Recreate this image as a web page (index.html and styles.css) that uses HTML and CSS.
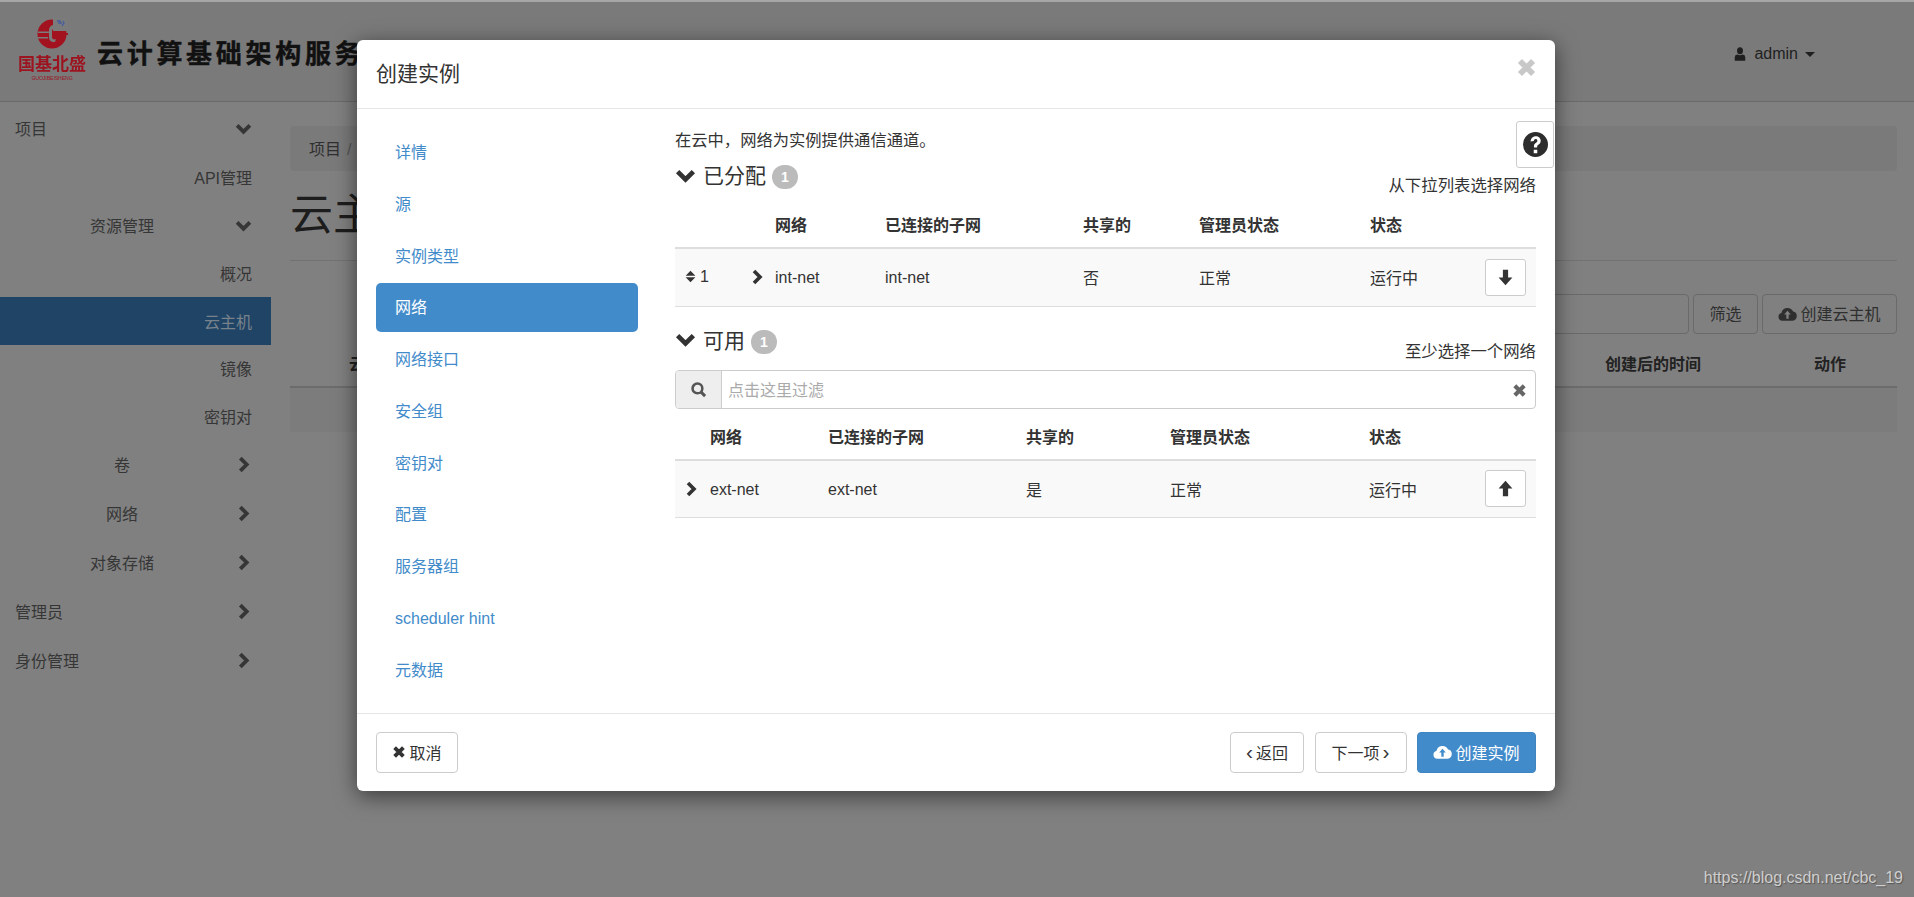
FILE: index.html
```html
<!DOCTYPE html>
<html lang="zh-CN">

<head>
    <meta charset="UTF-8">
    <title>创建实例</title>
    <link rel="stylesheet" href="styles.css">
</head>

<body>
    <!-- glyphicon style icons -->
    <svg class="sprite" xmlns="http://www.w3.org/2000/svg">
        <symbol id="i-down" viewBox="0 0 16 16"><path d="M2 5l6 6 6-6" fill="none" stroke="currentColor" stroke-width="3.6"/></symbol>
        <symbol id="i-right" viewBox="0 0 16 16"><path d="M5 2l6 6-6 6" fill="none" stroke="currentColor" stroke-width="3.6"/></symbol>
        <symbol id="i-remove" viewBox="0 0 16 16"><path d="M3 3l10 10M13 3L3 13" fill="none" stroke="currentColor" stroke-width="4.4"/></symbol>
        <symbol id="i-search" viewBox="0 0 16 16"><circle cx="7" cy="7" r="4.6" fill="none" stroke="currentColor" stroke-width="2.4"/><path d="M10.2 10.2l4 4" stroke="currentColor" stroke-width="2.8"/></symbol>
        <symbol id="i-cloud" viewBox="0 0 16 16"><path fill-rule="evenodd" d="M3.6 14A3.3 3.3 0 0 1 2.9 7.5 5.2 5.2 0 0 1 12.7 6.3 3.9 3.9 0 0 1 12.3 14zM8 5.6L5.2 8.8H7V12.4H9V8.8H10.8z"/></symbol>
        <symbol id="i-user" viewBox="0 0 16 16"><ellipse cx="8" cy="4.4" rx="3.4" ry="4"/><path d="M2 15.6V11.6Q2 9 5 8.6Q8 10.4 11 8.6Q14 9 14 11.6V15.6z"/></symbol>
        <symbol id="i-arrow-down" viewBox="0 0 16 16"><path d="M5.800 1.500h4.400v6.500h3.600L8 14.500 2.200 8h3.600z"/></symbol>
        <symbol id="i-arrow-up" viewBox="0 0 16 16"><path d="M5.800 14.500h4.400V8h3.600L8 1.500 2.200 8h3.600z"/></symbol>
        <symbol id="i-sort" viewBox="0 0 16 16"><path d="M8 1l6 6H2zM8 15l-6-6h12z"/></symbol>
        <symbol id="i-help" viewBox="0 0 24 24"><path fill-rule="evenodd" d="M12 0a12 12 0 1 0 0 24 12 12 0 0 0 0-24zM10.3 17h3.4v3.4h-3.4zM7.3 9.2C7.4 6 9.500 4 12.300 4 15 4 17 5.800 17 8.300c0 1.900-.9 3-2.300 3.900-.8.5-1.100 1-1.100 1.900v.8h-3.100v-1.100c0-1.600.6-2.600 2-3.500 1-.6 1.300-1.200 1.300-2 0-.9-.7-1.500-1.600-1.500-1 0-1.700.7-1.800 1.900z"/></symbol>
    </svg>

    <div class="page">
        <header class="topbar">
            <div class="brand">
                <div class="logo">
                    <svg class="logo-mark" viewBox="0 0 32 32" xmlns="http://www.w3.org/2000/svg">
                        <circle cx="16" cy="16" r="14.500" fill="#a3121f"/>
                        <path d="M17 0h15v13H17z" fill="#7b7b7b"/>
                        <path d="M17 7h5v3h-5zM2 13.500h11v1.500H2zM2 19h10v1.500H2z" fill="#7b7b7b"/>
                        <path d="M17 15h15v2H22v3h-5z" fill="#a3121f"/>
                        <path d="M13 13c0-4 2-5.500 4-6v4c-1 .5-1 1.500-1 2v6c0 2 2 3 4 2l-1 3c-3 .5-6-1-6-5z" fill="#7b7b7b"/>
                        <path d="M21 3h3l-1 2h3M27 3l1 2-2 3" fill="none" stroke="#4a5f9c" stroke-width="1.400"/>
                    </svg>
                    <div class="logo-name">国基北盛</div>
                    <div class="logo-sub"><span>GUOJIBEISHENG</span></div>
                </div>
                <div class="brand-title">云计算基础架构服务</div>
            </div>
            <div class="user-menu">
                <svg class="icon-user"><use href="#i-user"/></svg>
                <span>admin</span>
                <span class="caret"></span>
            </div>
        </header>

        <div class="layout">
            <nav class="sidebar">
                <div class="side-item top first">项目<svg class="side-icon"><use href="#i-down"/></svg></div>
                <div class="side-item leaf">API管理</div>
                <div class="side-item mid">资源管理<svg class="side-icon"><use href="#i-down"/></svg></div>
                <div class="side-item leaf">概况</div>
                <div class="side-item leaf active">云主机</div>
                <div class="side-item leaf">镜像</div>
                <div class="side-item leaf">密钥对</div>
                <div class="side-item mid">卷<svg class="side-icon"><use href="#i-right"/></svg></div>
                <div class="side-item mid">网络<svg class="side-icon"><use href="#i-right"/></svg></div>
                <div class="side-item mid">对象存储<svg class="side-icon"><use href="#i-right"/></svg></div>
                <div class="side-item top">管理员<svg class="side-icon"><use href="#i-right"/></svg></div>
                <div class="side-item top">身份管理<svg class="side-icon"><use href="#i-right"/></svg></div>
            </nav>

            <main class="content">
                <div class="breadcrumb">项目<span class="crumb-sep">/</span></div>
                <h1 class="page-title">云主</h1>
                <div class="actions">
                    <div class="fake-input"></div>
                    <div class="bg-btn">筛选</div>
                    <div class="bg-btn"><svg class="btn-icon"><use href="#i-cloud"/></svg>创建云主机</div>
                </div>
                <div class="bg-table-head">
                    <span class="col-name">云</span>
                    <span class="col-time">创建后的时间</span>
                    <span class="col-action">动作</span>
                </div>
                <div class="bg-table-row"></div>
            </main>
        </div>
    </div>

    <div class="modal">
        <div class="modal-header">
            <div class="modal-title">创建实例</div>
            <svg class="modal-close"><use href="#i-remove"/></svg>
        </div>

        <div class="modal-body">
            <ul class="steps">
                <li>详情</li>
                <li>源</li>
                <li>实例类型</li>
                <li class="current">网络</li>
                <li>网络接口</li>
                <li>安全组</li>
                <li>密钥对</li>
                <li>配置</li>
                <li>服务器组</li>
                <li>scheduler hint</li>
                <li>元数据</li>
            </ul>

            <div class="pane">
                <p class="intro">在云中，网络为实例提供通信通道。</p>

                <div class="sec-head">
                    <div class="sec-title">
                        <svg class="sec-chevron"><use href="#i-down"/></svg>
                        <span class="sec-name">已分配</span>
                        <span class="badge">1</span>
                    </div>
                    <div class="sec-note">从下拉列表选择网络</div>
                </div>

                <table class="net-table">
                    <colgroup>
                        <col style="width: 75px">
                        <col style="width: 25px">
                        <col style="width: 110px">
                        <col style="width: 198px">
                        <col style="width: 116px">
                        <col style="width: 171px">
                        <col style="width: 115px">
                        <col style="width: 51px">
                    </colgroup>
                    <thead>
                        <tr>
                            <th></th>
                            <th></th>
                            <th>网络</th>
                            <th>已连接的子网</th>
                            <th>共享的</th>
                            <th>管理员状态</th>
                            <th>状态</th>
                            <th></th>
                        </tr>
                    </thead>
                    <tbody>
                        <tr>
                            <td class="cell-sort"><svg class="sort-icon"><use href="#i-sort"/></svg>1</td>
                            <td><svg class="row-chevron"><use href="#i-right"/></svg></td>
                            <td class="cell-net">int-net</td>
                            <td class="cell-net">int-net</td>
                            <td>否</td>
                            <td>正常</td>
                            <td>运行中</td>
                            <td><button class="move-btn"><svg><use href="#i-arrow-down"/></svg></button></td>
                        </tr>
                    </tbody>
                </table>

                <div class="sec-head second">
                    <div class="sec-title">
                        <svg class="sec-chevron"><use href="#i-down"/></svg>
                        <span class="sec-name">可用</span>
                        <span class="badge">1</span>
                    </div>
                    <div class="sec-note">至少选择一个网络</div>
                </div>

                <div class="filter">
                    <div class="filter-addon"><svg><use href="#i-search"/></svg></div>
                    <div class="filter-text">点击这里过滤</div>
                    <svg class="filter-clear"><use href="#i-remove"/></svg>
                </div>

                <table class="net-table short">
                    <colgroup>
                        <col style="width: 35px">
                        <col style="width: 118px">
                        <col style="width: 198px">
                        <col style="width: 144px">
                        <col style="width: 199px">
                        <col style="width: 116px">
                        <col style="width: 51px">
                    </colgroup>
                    <thead>
                        <tr>
                            <th></th>
                            <th>网络</th>
                            <th>已连接的子网</th>
                            <th>共享的</th>
                            <th>管理员状态</th>
                            <th>状态</th>
                            <th></th>
                        </tr>
                    </thead>
                    <tbody>
                        <tr>
                            <td class="cell-chevron"><svg class="row-chevron"><use href="#i-right"/></svg></td>
                            <td class="cell-net">ext-net</td>
                            <td class="cell-net">ext-net</td>
                            <td>是</td>
                            <td>正常</td>
                            <td>运行中</td>
                            <td><button class="move-btn"><svg><use href="#i-arrow-up"/></svg></button></td>
                        </tr>
                    </tbody>
                </table>
            </div>

            <div class="help-tab"><svg><use href="#i-help"/></svg></div>
        </div>

        <div class="modal-footer">
            <button class="btn cancel"><svg class="btn-icon small"><use href="#i-remove"/></svg>取消</button>
            <div class="footer-right">
                <button class="btn back"><span class="btn-angle left">‹</span>返回</button>
                <button class="btn next">下一项<span class="btn-angle right">›</span></button>
                <button class="btn primary"><svg class="btn-icon"><use href="#i-cloud"/></svg>创建实例</button>
            </div>
        </div>
    </div>

    <div class="watermark">https://blog.csdn.net/cbc_19</div>
</body>

</html>
```

FILE: styles.css
```css
* {
    box-sizing: border-box;
}

body {
    margin: 0;
    height: 897px;
    overflow: hidden;
    background-color: #808080;
    color: #2f2f2f;
    font-family: "Liberation Sans", "Noto Sans CJK SC", sans-serif;
    font-size: 16px;
}

.sprite {
    display: none;
}

svg {
    fill: currentColor;
}

/* page behind the dialog, colours already darkened by the backdrop */
.topbar {
    display: flex;
    justify-content: space-between;
    height: 102px;
    padding-right: 99px;
    background-color: #7a7a7a;
    border-top: 2px solid #a6a6a6;
    border-bottom: 1px solid #6a6a6a;
}

.brand {
    display: flex;
    align-items: flex-start;
}

.logo {
    width: 97px;
    padding: 16px 0 0 18px;
    filter: blur(0.4px);
}

.logo-mark {
    display: block;
    width: 32px;
    height: 32px;
    margin-left: 18px;
}

.logo-name {
    width: 70px;
    margin-top: 5px;
    color: #9c1420;
    font-size: 17px;
    font-weight: bold;
    line-height: 19px;
    white-space: nowrap;
}

.logo-sub {
    width: 68px;
    height: 5px;
    margin-top: 1px;
    border-top: 1px solid transparent;
    color: #9c1420;
    font-size: 5px;
    line-height: 5px;
    text-align: center;
    white-space: nowrap;
}

.brand-title {
    margin-top: 34px;
    color: #111;
    font-size: 26px;
    font-weight: bold;
    letter-spacing: 3.700px;
    line-height: 36px;
    white-space: nowrap;
    -webkit-text-stroke: 0.4px #111;
}

.user-menu {
    display: flex;
    align-items: center;
    gap: 7px;
    height: 100px;
    padding-top: 4px;
    font-size: 16px;
    color: #1f1f1f;
}

.icon-user {
    width: 14px;
    height: 16px;
}

.caret {
    margin-left: 0;
    border-top: 5px solid #1f1f1f;
    border-left: 5px solid transparent;
    border-right: 5px solid transparent;
}

.layout {
    display: flex;
}

.sidebar {
    flex: none;
    width: 271px;
    padding-top: 1px;
    color: #363636;
}

.side-item {
    position: relative;
    display: flex;
    align-items: center;
    white-space: nowrap;
}

.side-item.top {
    height: 49px;
    padding-left: 15px;
}

.side-item.first {
    height: 50px;
}

.side-item.mid {
    height: 49px;
    justify-content: center;
    padding-right: 27px;
}

.side-item.leaf {
    height: 47.500px;
    justify-content: flex-end;
    padding-right: 19px;
}

.side-item.active {
    background-color: #204466;
    color: #77828c;
}

.side-icon {
    position: absolute;
    left: 235px;
    width: 17px;
    height: 17px;
    color: #363636;
}

.content {
    flex: none;
    width: 1626px;
    padding: 24px 0 0 19px;
}

.breadcrumb {
    width: 1607px;
    height: 45px;
    padding: 0 19px;
    background-color: #7a7a7a;
    border-radius: 4px;
    line-height: 47px;
}

.crumb-sep {
    margin-left: 6px;
    color: #555;
}

.page-title {
    height: 90px;
    margin: 0 0 33px;
    border-bottom: 1px solid #727272;
    color: #1d1d1d;
    font-size: 43px;
    font-weight: normal;
    line-height: 89px;
    overflow: hidden;
}

.actions {
    display: flex;
    justify-content: flex-end;
    gap: 4px;
    height: 40px;
}

.fake-input {
    width: 400px;
    border: 1px solid #6a6a6a;
    border-radius: 4px;
}

.bg-btn {
    display: flex;
    align-items: center;
    justify-content: center;
    width: 65px;
    padding-bottom: 2px;
    border: 1px solid #6a6a6a;
    border-radius: 4px;
    color: #2f2f2f;
}

.bg-btn:last-child {
    width: 135px;
}

.bg-table-head {
    position: relative;
    height: 54px;
    border-bottom: 2px solid #6c6c6c;
    font-weight: bold;
    line-height: 62px;
    color: #222;
}

.bg-table-head span {
    position: absolute;
    top: 0;
    white-space: nowrap;
}

.col-name {
    left: 59px;
}

.col-time {
    left: 1315px;
}

.col-action {
    left: 1524px;
}

.bg-table-row {
    height: 44px;
    background-color: #7c7c7c;
}

.watermark {
    position: absolute;
    right: 11px;
    top: 867px;
    color: #cfcfcf;
    font-size: 16px;
    line-height: 22px;
    text-shadow: 1px 1px 1px #555;
}

/* dialog */
.modal {
    position: absolute;
    left: 357px;
    top: 40px;
    display: flex;
    flex-direction: column;
    width: 1198px;
    height: 751px;
    background-color: #fff;
    border-radius: 6px;
    box-shadow: 0 5px 22px rgba(0, 0, 0, 0.55);
    color: #333;
}

.modal-header {
    position: relative;
    flex: none;
    height: 69px;
    padding: 0 19px;
    border-bottom: 1px solid #e5e5e5;
}

.modal-title {
    font-size: 21px;
    line-height: 65px;
    height: 68px;
    padding-top: 1px;
}

.modal-close {
    position: absolute;
    right: 18px;
    top: 17px;
    width: 21px;
    height: 21px;
    color: #c8c8c8;
}

.modal-body {
    position: relative;
    display: flex;
    flex: none;
    gap: 37.500px;
    height: 604px;
    padding: 19px 19px 0;
}

.steps {
    display: flex;
    flex: none;
    flex-direction: column;
    gap: 2.750px;
    width: 261.500px;
    margin: 0;
    padding: 0;
    list-style: none;
}

.steps li {
    height: 49px;
    padding-left: 19px;
    border-radius: 5px;
    color: #428bca;
    line-height: 49px;
}

.steps .current {
    background-color: #428bca;
    color: #fff;
}

.pane {
    flex: 1;
    min-width: 0;
}

.intro {
    height: 32px;
    margin: 0;
    padding-top: 1px;
    font-size: 16.300px;
    line-height: 22px;
}

.sec-head {
    display: flex;
    justify-content: space-between;
    height: 36px;
}

.sec-head.second {
    margin-top: 19px;
}

.sec-title {
    display: flex;
    align-items: center;
    height: 30px;
    font-size: 21px;
}

.sec-name {
    margin-bottom: 2px;
}

.sec-chevron {
    flex: none;
    width: 21px;
    height: 21px;
    margin: 0 7px 0 0;
    color: #333;
}

.badge {
    display: flex;
    align-items: center;
    justify-content: center;
    width: 26px;
    height: 24px;
    margin: 3px 0 0 6px;
    background-color: #bbb;
    border-radius: 12px;
    color: #fff;
    font-size: 14px;
    font-weight: bold;
}

.sec-head.second .sec-title {
    height: 28px;
}

.sec-head.second .badge {
    margin-left: 6px;
    margin-top: 5px;
}

.sec-note {
    align-self: flex-end;
    font-size: 16.400px;
    line-height: 22px;
}

.net-table {
    width: 861px;
    margin-top: 7px;
    border-collapse: collapse;
    table-layout: fixed;
}

.net-table th {
    height: 45px;
    padding: 0 0 2px;
    border-bottom: 2px solid #ddd;
    font-weight: bold;
    text-align: left;
}

.net-table td {
    height: 58px;
    padding: 0;
    background-color: #f9f9f9;
    border-bottom: 1px solid #ddd;
}

.net-table .cell-net {
    padding-top: 2px;
}

.net-table.short {
    margin-top: 6px;
}

.net-table.short td {
    height: 57px;
}

.cell-sort {
    padding-left: 9px !important;
    color: #333;
}

.cell-chevron {
    padding-left: 9px !important;
}

.sort-icon {
    width: 13px;
    height: 15px;
    margin-right: 3px;
    vertical-align: -2px;
}

.row-chevron {
    display: block;
    width: 16px;
    height: 16px;
    margin-left: -1px;
    color: #333;
}

.move-btn {
    display: flex;
    align-items: center;
    justify-content: center;
    width: 41px;
    height: 37px;
    padding: 0;
    background-color: #fff;
    border: 1px solid #ccc;
    border-radius: 3px;
    color: #333;
}

.move-btn svg {
    width: 19px;
    height: 19px;
}

.filter {
    position: relative;
    display: flex;
    align-items: center;
    height: 39.500px;
    margin-top: 8px;
    border: 1px solid #ccc;
    border-radius: 4px;
}

.filter-addon {
    display: flex;
    align-items: center;
    justify-content: center;
    width: 46px;
    height: 100%;
    background-color: #eee;
    border-right: 1px solid #ccc;
    border-radius: 3px 0 0 3px;
    color: #555;
}

.filter-addon svg {
    width: 17px;
    height: 17px;
}

.filter-text {
    padding-left: 6px;
    padding-bottom: 1px;
    color: #aaa;
}

.filter-clear {
    position: absolute;
    right: 8px;
    top: 12px;
    width: 15px;
    height: 15px;
    color: #666;
}

.help-tab {
    position: absolute;
    right: 1px;
    top: 12px;
    display: flex;
    align-items: center;
    justify-content: center;
    width: 38px;
    height: 47px;
    background-color: #fff;
    border: 1px solid #ccc;
    border-radius: 3px;
}

.help-tab svg {
    width: 25px;
    height: 25px;
    color: #2d2d2d;
}

.modal-footer {
    display: flex;
    flex: none;
    justify-content: space-between;
    height: 78px;
    padding: 18px 19px;
    border-top: 1px solid #e5e5e5;
}

.footer-right {
    display: flex;
    gap: 10.500px;
}

.btn {
    display: flex;
    align-items: center;
    justify-content: center;
    height: 41px;
    padding: 0 0 2px;
    background-color: #fff;
    border: 1px solid #ccc;
    border-radius: 4px;
    color: #333;
    font-family: inherit;
    font-size: 16px;
}

.btn.cancel {
    width: 82px;
}

.btn.back {
    width: 74px;
}

.btn.next {
    width: 92px;
}

.btn.primary {
    width: 119px;
    background-color: #428bca;
    border-color: #3f85c2;
    color: #fff;
}

.btn-angle {
    font-size: 21px;
    line-height: 20px;
}

.btn-angle.left {
    margin-right: 3px;
}

.btn-angle.right {
    margin-left: 3px;
}

.btn-icon {
    flex: none;
    width: 19px;
    height: 19px;
    margin-right: 3px;
}

.btn-icon.small {
    width: 14px;
    height: 14px;
    margin-right: 3px;
}
```
